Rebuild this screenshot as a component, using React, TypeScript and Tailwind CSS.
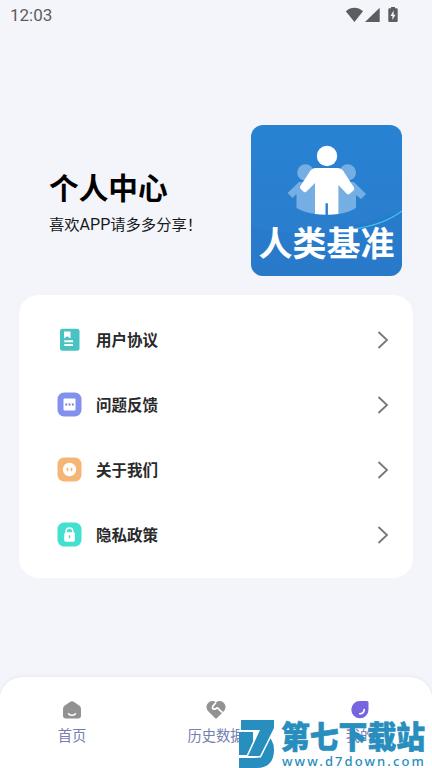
import type { ReactNode } from 'react'

const MENU = [
  { id: 'terms', label: '用户协议', icon: <TermsIcon /> },
  { id: 'feedback', label: '问题反馈', icon: <FeedbackIcon /> },
  { id: 'about', label: '关于我们', icon: <AboutIcon /> },
  { id: 'privacy', label: '隐私政策', icon: <PrivacyIcon /> },
]

function TermsIcon() {
  return (
    <svg width="25" height="25" viewBox="0 0 25 25">
      <rect x="3" y="1.7" width="19.5" height="22" rx="2.5" fill="#48c3c1" />
      <path d="M7 4.5h6.5v7l-3.2-2.3L7 11.5z" fill="#fff" />
      <path d="M7.3 14.2H16M7.3 17.9H16" stroke="#fff" strokeWidth="2" />
    </svg>
  )
}

function FeedbackIcon() {
  return (
    <svg width="25" height="25" viewBox="0 0 25 25">
      <rect x="0.5" y="0.5" width="24" height="24" rx="6.5" fill="#8291ee" />
      <rect x="6.5" y="6.5" width="12" height="12" rx="1" fill="#fff" />
      <path d="M8.3 12.5h1.9M11.6 12.5h1.9M14.9 12.5h1.9" stroke="#7583d8" strokeWidth="1.9" />
    </svg>
  )
}

function AboutIcon() {
  return (
    <svg width="25" height="25" viewBox="0 0 25 25">
      <rect x="0.5" y="0.5" width="24" height="24" rx="6.5" fill="#f5b674" />
      <circle cx="12.5" cy="12.5" r="6.7" fill="#fff" />
      <path d="M10.5 10.8v3.4M14.5 10.8v3.4" stroke="#f5b674" strokeWidth="1.6" />
    </svg>
  )
}

function PrivacyIcon() {
  return (
    <svg width="25" height="25" viewBox="0 0 25 25">
      <rect x="0.5" y="0.5" width="24" height="24" rx="6.5" fill="#43e0cf" />
      <path d="M9.2 12V9.2a3.3 3.3 0 0 1 6.6 0V12" fill="none" stroke="#fff" strokeWidth="1.5" />
      <rect x="7.2" y="10.2" width="10.8" height="9.6" rx="1.8" fill="#fff" />
      <path d="M12.5 13.3v3" stroke="#68c9c0" strokeWidth="1.4" />
    </svg>
  )
}

function StatusBar() {
  return (
    <div className="flex h-[30px] items-center justify-between pl-[10px] pr-[33px] font-['Roboto',sans-serif] text-[17px] text-[#5c5d60]">
      <span className="pt-px">12:03</span>
      <svg width="54" height="18" viewBox="0 0 54 18" fill="#5c5d60">
        <path d="M.8 5.2C6 .7 12.8.7 18 5.2L9.4 16z" />
        <path d="M34.7 1.8V16H20z" />
        <path
          fillRule="evenodd"
          d="M46 1h4v1.2h1.5q1.2 0 1.2 1.2v11.4q0 1.2-1.2 1.2h-7q-1.2 0-1.2-1.2V3.4q0-1.2 1.2-1.2H46zM48.6 4.5 45.5 10h1.9v4l3.1-5.3h-1.9z"
        />
      </svg>
    </div>
  )
}

function AppLogo() {
  return (
    <div className="relative h-[151px] w-[151px] overflow-hidden rounded-[12px] bg-gradient-to-b from-[#2882d2] to-[#2b7ccc]">
      <svg className="absolute inset-0" width="151" height="151" viewBox="0 0 151 151">
        <path d="M0 101C30 112 83 110 151 86V151H0z" fill="#2675c5" opacity=".3" />
        <path d="M101 104Q131 101 151 86" fill="none" stroke="#43c2ed" strokeWidth="1.4" />
        <g fill="#75aee2">
          <circle cx="54.5" cy="47.5" r="8.3" />
          <path d="M48 57h17v32q-11-1-19.5-6V69l-4 4-5-5z" />
          <circle cx="96.7" cy="47.5" r="8.3" />
          <path d="M86 57h17l12 12-5 5-5-4v13q-8 5-18 6z" />
        </g>
        <g fill="#fff">
          <circle cx="76" cy="31" r="10.2" />
          <path d="M64 43h23q3 0 5 2.5l11 17q1 1.5-.5 3l-4 3.5q-1.7 1-3-.5L87.4 60v29q-5 .8-10.5.8V78.300h-2.4v11.5Q69 89.800 64 89V58l-8.500 8.500q-1.300 1.300-2.800.2l-3-2.700q-1.500-1.500-.3-3L59.500 45.500Q61.500 43 64 43z" />
        </g>
      </svg>
      <div className="absolute inset-x-0 top-[100px] whitespace-nowrap text-center text-[34px] font-bold leading-[34px] text-white">
        人类基准
      </div>
    </div>
  )
}

function HomeIcon() {
  return (
    <svg width="20" height="20" viewBox="0 0 20 20">
      <path d="M8.3 1.7q1.7-1.1 3.4 0l5.5 3.7q1.8 1.3 1.8 3.4v6.7q0 3-3 3H4q-3 0-3-3V8.800Q1 6.700 2.800 5.400z" fill="#929292" />
      <path d="M6.5 13.8q3.500 2.800 7 0" fill="none" stroke="#fff" strokeWidth="1.6" strokeLinecap="round" />
    </svg>
  )
}

function HistoryIcon() {
  return (
    <svg width="20" height="20" viewBox="0 0 20 20">
      <path d="M11 18q-1 1-2 0L2 11Q-1 7 1.700 3.500 5-.5 10 2.200q5-2.700 8.300 1.300 2.700 3.500-.3 7.500z" fill="#929292" />
      <path d="M10 2.500 6.800 6.300q-1 2.200 1 2.900 1.700.2 3.200-1.300 1.500.3 2.300 1.800l3.200 3" fill="none" stroke="#fff" strokeWidth="1.7" />
    </svg>
  )
}

function ProfileIcon() {
  return (
    <svg width="20" height="20" viewBox="0 0 20 20">
      <path d="M10 1h7q1.500 0 1.500 1.500v7A8.600 8.600 0 1 1 10 1z" fill="#7665df" />
      <path d="M14.2 9.500q-.3 4-4.400 4.300" fill="none" stroke="#fff" strokeWidth="1.7" strokeLinecap="round" />
    </svg>
  )
}

function Tab({ icon, label }: { icon: ReactNode; label: string }) {
  return (
    <div className="flex flex-1 flex-col items-center">
      {icon}
      <span className="mt-[4px] text-[14.3px] leading-[22px] text-[#7380b0]">{label}</span>
    </div>
  )
}

function Watermark() {
  return (
    <div className="absolute left-[237px] top-[717px] flex text-[#278ebe]">
      <svg width="40" height="51" viewBox="0 0 40 51">
        <path d="M2 15h14v23H2z" fill="#278ebe" />
        <path d="M27 17q10 4 10 16 0 18-18 18H2V41h15q9 0 9-7 0-4-3-6z" fill="#278ebe" />
        <path d="M4 3h33v8L23 39H11l12-26H4z" fill="#278ebe" stroke="#fff" strokeWidth="3" paintOrder="stroke" />
      </svg>
      <div className="ml-[4px] flex flex-col">
        <span className="h-[38px] scale-y-[1.08] whitespace-nowrap text-[28.8px] font-black leading-[35px] [-webkit-text-stroke:0.6px_#278ebe]">
          第七下载站
        </span>
        <span className="whitespace-nowrap pl-px font-['Noto_Sans',sans-serif] text-[13px] font-medium leading-[13px] tracking-[2.1px]">
          www.d7down.com
        </span>
      </div>
    </div>
  )
}

export default function App() {
  return (
    <div className="relative flex h-[768px] w-[432px] flex-col overflow-hidden bg-[#f4f5fa] font-['Noto_Sans_CJK_SC',sans-serif]">
      <StatusBar />
      <header className="mt-[95px] flex justify-between pl-[49px] pr-[30px]">
        <div className="pt-[42px]">
          <h1 className="text-[29.7px] font-bold leading-[40px] text-black">个人中心</h1>
          <p className="mt-[5px] whitespace-nowrap font-['Roboto','Noto_Sans_CJK_SC',sans-serif] text-[15.3px] leading-[25px] text-[#17181a]">
            喜欢<span className="text-[16px]">APP</span>请多多分享！
          </p>
        </div>
        <AppLogo />
      </header>

      <main className="mx-[19px] mt-[19px] h-[283px] rounded-[20px] bg-white pt-[12.5px]">
        {MENU.map((item) => (
          <div key={item.id} className="flex h-[64.8px] items-center pl-[38px] pr-[23px]">
            {item.icon}
            <span className="ml-[14px] flex-1 text-[15.5px] font-bold text-[#29292b]">{item.label}</span>
            <svg className="mt-px" width="14" height="20" viewBox="0 0 14 20" fill="none" stroke="#777" strokeWidth="1.8">
              <path d="m2.5 2 8.500 8-8.500 8" />
            </svg>
          </div>
        ))}
      </main>

      <nav className="mt-auto flex h-[91px] rounded-t-[22px] bg-white pt-[23px] shadow-[0_-1px_3px_rgba(90,90,120,0.08)]">
        <Tab icon={<HomeIcon />} label="首页" />
        <Tab icon={<HistoryIcon />} label="历史数据" />
        <Tab icon={<ProfileIcon />} label="我的" />
      </nav>
      <Watermark />
    </div>
  )
}
